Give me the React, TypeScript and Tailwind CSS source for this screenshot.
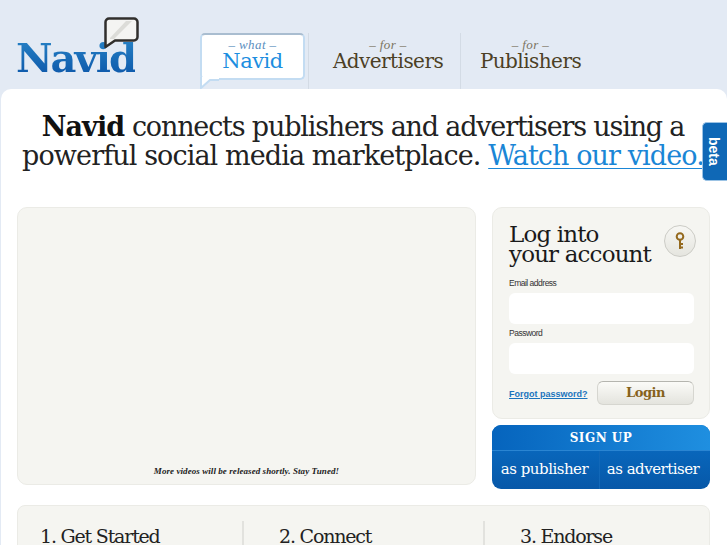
import React from 'react';

const slab = "font-['DejaVu_Serif',serif]";

const NavTab = ({ small, label, width, pad }: { small: string; label: string; width: string; pad: string }) => (
  <div className={`${width} ${pad} h-[56px] mt-[33px] flex flex-col items-center border-l border-[#d3dbe5]`}>
    <div className="mt-[5px] h-[13px] leading-[13px] text-[13px] italic tracking-[0.400px] text-[#7b7460] font-['Liberation_Serif',serif]">– {small} –</div>
    <div className={`${slab} text-[20px] leading-[17px] tracking-[-0.550px] text-[#4c4025] pt-[2px]`}>{label}</div>
  </div>
);

const Logo = () => (
  <div className="relative w-[130px] h-[89px] ml-[16px] shrink-0">
    <div className={`${slab} absolute left-0 top-[35px] font-bold text-[40px] leading-[46px] tracking-[-2px] text-transparent bg-clip-text bg-gradient-to-b from-[#2a86c8] to-[#0a52a6]`}>
      Navid
    </div>
    <svg className="absolute left-[88px] top-[17px]" width="35" height="32" viewBox="0 0 35 32">
      <path d="M5 1.500h25a3.500 3.500 0 0 1 3.500 3.500v15a3.500 3.500 0 0 1-3.500 3.500H11L1.500 30V5A3.500 3.500 0 0 1 5 1.500z" fill="#f4f4f2" stroke="#302e2c" strokeWidth="2.500" strokeLinejoin="round" />
      <path d="M6 21L22 4h6L10 22H6z" fill="#dcdcd8" />
    </svg>
  </div>
);

const KeyIcon = () => (
  <svg width="12" height="18" viewBox="0 0 12 18" fill="none">
    <circle cx="6" cy="4.500" r="3.300" stroke="#94691e" strokeWidth="2" />
    <path d="M6 8v9M6 12h3M6 15.500h3" stroke="#94691e" strokeWidth="2" />
  </svg>
);

const Field = ({ label }: { label: string }) => (
  <div>
    <div className="text-[8.500px] leading-[12px] tracking-[-0.500px] text-[#333] font-['Liberation_Sans',sans-serif]">{label}</div>
    <div className="mt-[4px] h-[31px] rounded-[6px] bg-white" />
  </div>
);

const Step = ({ title, width, border }: { title: string; width: string; border?: boolean }) => (
  <div className={`${width} h-[60px] ${border ? 'pl-[35px] border-l-2 border-[#e2e2de]' : 'pl-[22px]'}`}>
    <div className={`${slab} text-[19px] leading-[30px] tracking-[-1.200px] text-[#222]`}>{title}</div>
  </div>
);

export default function App() {
  return (
    <div className="relative h-[545px] w-[727px] overflow-hidden bg-[#e3eaf4]">
      <header className="flex h-[89px]">
        <Logo />
        <div className="relative mt-[33px] ml-[54px] w-[105px] h-[56px] shrink-0">
          <div className="h-[47px] rounded-[5px] border-2 border-[#c3dcf2] border-t-[#a9bdd0] bg-white flex flex-col items-center">
            <div className="mt-[3px] h-[13px] leading-[13px] text-[13px] italic tracking-[0.400px] text-[#5c8fc0] font-['Liberation_Serif',serif]">– what –</div>
            <div className={`${slab} text-[21px] leading-[20px] tracking-[-0.500px] text-[#1c8ee0]`}>Navid</div>
          </div>
          <svg className="absolute left-0 top-[44px]" width="20" height="12" viewBox="0 0 20 12">
            <path d="M1 0v11L12 2h7V0z" fill="#fff" />
            <path d="M1 0v11L10 3h9" fill="none" stroke="#c3dcf2" strokeWidth="2" />
          </svg>
        </div>
        <div className="ml-[3px] flex">
          <NavTab small="for" label="Advertisers" width="w-[152px]" pad="pl-[7px]" />
          <NavTab small="for" label="Publishers" width="w-[140px]" pad="" />
        </div>
      </header>

      <main className="ml-[1px] h-[456px] rounded-t-[10px] bg-white pt-[23px] pl-[16px] pr-[17px]">
        <h1 className={`${slab} ml-[-16px] mr-[-15px] text-center text-[27px] leading-[29px] tracking-[-0.900px] font-normal text-[#222] whitespace-nowrap`}>
          <b className="font-bold text-[#111]">Navid</b> <span className="tracking-[-1.180px]">connects publishers and advertisers using a</span><br />
          powerful social media marketplace. <span className="text-[#1a86d6] underline decoration-1 underline-offset-3">Watch our video.</span>
        </h1>

        <div className="mt-[37px] flex gap-[16px]">
          <div className="w-[459px] h-[278px] rounded-[10px] border border-[#ebebe6] bg-[#f5f5f1] flex flex-col justify-end items-center pb-[7px]">
            <div className="text-[9px] leading-[12px] font-bold italic tracking-[0.070px] text-[#222] font-['Liberation_Serif',serif]">More videos will be released shortly. Stay Tuned!</div>
          </div>

          <div className="w-[218px]">
            <div className="h-[212px] rounded-[10px] border border-[#ebebe6] bg-[#f5f5f1] pl-[16px] pr-[15px] pt-[16px]">
              <div className="flex justify-between">
                <div className={`${slab} text-[23px] leading-[20px] tracking-[-0.850px] text-[#1a1a1a]`}>
                  Log into<br />your account
                </div>
                <div className="mt-[1px] mr-[-2px] w-[32px] h-[32px] rounded-full border border-[#ccccc6] bg-gradient-to-b from-[#f7f7f4] to-[#e5e5df] flex items-center justify-center">
                  <KeyIcon />
                </div>
              </div>
              <div className="mt-[13px] flex flex-col gap-[3px]">
                <Field label="Email address" />
                <Field label="Password" />
              </div>
              <div className="mt-[7px] flex items-center justify-between">
                <span className="pt-[3px] text-[9px] font-bold text-[#1b74bd] underline font-['Liberation_Sans',sans-serif]">Forgot password?</span>
                <div className={`${slab} w-[97px] h-[24px] rounded-[6px] border border-[#d6d6d0] border-t-[#b5b5af] bg-gradient-to-b from-[#fbfbf8] to-[#e4e4de] text-center text-[13px] leading-[22px] font-bold tracking-[-0.500px] text-[#86621c]`}>
                  Login
                </div>
              </div>
            </div>

            <div className="mt-[6px] h-[64px] rounded-[9px] overflow-hidden bg-gradient-to-b from-[#0a70c8] to-[#0758a8] text-white">
              <div className={`${slab} h-[25px] text-center text-[12px] leading-[26px] font-bold tracking-[0.500px] bg-gradient-to-r from-[#0664bd] to-[#1f8fe0]`}>SIGN UP</div>
              <div className="flex h-[39px] border-t border-[#2a85d2]">
                <div className={`${slab} w-[108px] pr-[2px] text-center text-[15px] leading-[36px] tracking-[-0.500px] border-r border-[#1268b8]`}>as publisher</div>
                <div className={`${slab} flex-1 pr-[4px] text-center text-[15px] leading-[36px] tracking-[-0.500px]`}>as advertiser</div>
              </div>
            </div>
          </div>
        </div>

        <div className="mt-[16px] h-[80px] rounded-[8px] border border-[#ebebe6] bg-[#f5f5f1] flex pt-[15px]">
          <Step title="1. Get Started" width="w-[224px]" />
          <Step title="2. Connect" width="w-[241px]" border />
          <Step title="3. Endorse" width="flex-1" border />
        </div>
      </main>

      <div className="absolute left-[702px] top-[122px] h-[59px] w-[25px] rounded-l-[5px] border border-[#9cc3e4] border-r-0 bg-[#0f68b6] flex items-center justify-center pr-[4px]">
        <span className="[writing-mode:vertical-rl] text-[14px] font-bold text-white font-['Liberation_Sans',sans-serif]">beta</span>
      </div>
    </div>
  );
}
